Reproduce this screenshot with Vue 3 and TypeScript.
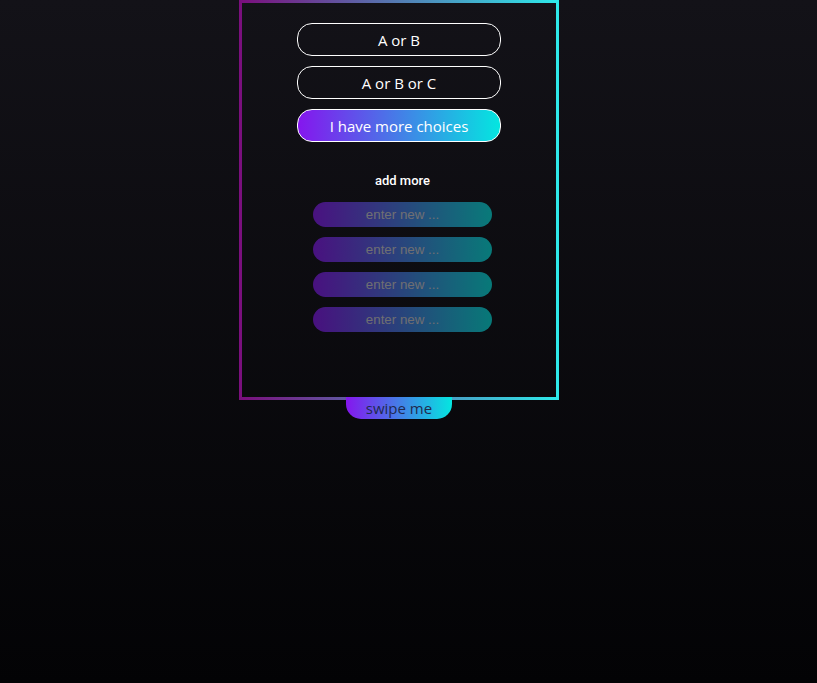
<script setup lang="ts">
import { ref } from 'vue'

interface Mode {
  id: string
  label: string
}

const modes: Mode[] = [
  { id: 'two', label: 'A or B' },
  { id: 'three', label: 'A or B or C' },
  { id: 'more', label: 'I have more choices' },
]

const selected = ref<string>('more')
const choices = ref<string[]>(['', '', '', ''])

function addChoice(): void {
  choices.value.push('')
}
</script>

<template>
  <main class="page">
    <section class="panel">
      <div class="modes">
        <button
          v-for="mode in modes"
          :key="mode.id"
          type="button"
          class="mode"
          :class="{ active: mode.id === selected }"
          :aria-pressed="mode.id === selected"
          @click="selected = mode.id"
        >
          {{ mode.label }}
        </button>
      </div>
      <form class="entries" @submit.prevent>
        <button type="button" class="add" @click="addChoice">add more</button>
        <input
          v-for="(_, index) in choices"
          :key="index"
          v-model="choices[index]"
          class="entry"
          type="text"
          placeholder="enter new ..."
          :aria-label="`Choice ${index + 1}`"
        />
      </form>
    </section>
    <button type="button" class="swipe">swipe me</button>
  </main>
</template>

<style>
body {
  margin: 0;
  background: #030304;
}
</style>

<style scoped>
.page {
  box-sizing: border-box;
  min-height: 100vh;
  padding-right: 19px;
  display: flex;
  flex-direction: column;
  align-items: center;
  background: linear-gradient(#131218, #030305);
  font-family: "Segoe UI", "Open Sans", "Noto Sans", sans-serif;
}

.panel {
  box-sizing: border-box;
  width: 320px;
  max-width: 100%;
  min-height: 400px;
  padding: 20px 55px;
  border: 3px solid;
  border-image: linear-gradient(to right, #7a0f7d, #2ee9ea) 1;
}

.modes {
  display: flex;
  flex-direction: column;
  gap: 10px;
}

.mode {
  height: 33px;
  padding: 0;
  border: 1px solid #fff;
  border-radius: 15px;
  background: transparent;
  color: #fff;
  font-family: inherit;
  font-size: 15px;
}

.mode.active {
  background: linear-gradient(to right, #8516ee, #04e6e0);
}

.entries {
  display: flex;
  flex-direction: column;
  align-items: center;
  gap: 10px;
  padding: 26px 0 0 7px;
}

.add {
  height: 24px;
  padding: 0;
  border: 0;
  background: none;
  color: #fff;
  font-family: Roboto, Arial, sans-serif;
  font-size: 13px;
  font-weight: 500;
}

.entry {
  box-sizing: border-box;
  width: 179px;
  height: 25px;
  padding: 0 12px;
  border: 0;
  border-radius: 15px;
  background: linear-gradient(to right, #8516ee, #04e6e0);
  opacity: 0.5;
  text-align: center;
  font-family: "Liberation Sans", Arial, sans-serif;
}

.entry::placeholder {
  color: #d0d0d4;
}

.swipe {
  height: 22px;
  margin-top: -3px;
  padding: 0 20px;
  border: 0;
  border-radius: 0 0 15px 15px;
  background: linear-gradient(to right, #8516ee, #04e6e0);
  color: #202a50;
  font-family: inherit;
  font-size: 15px;
  line-height: 22px;
}
</style>
